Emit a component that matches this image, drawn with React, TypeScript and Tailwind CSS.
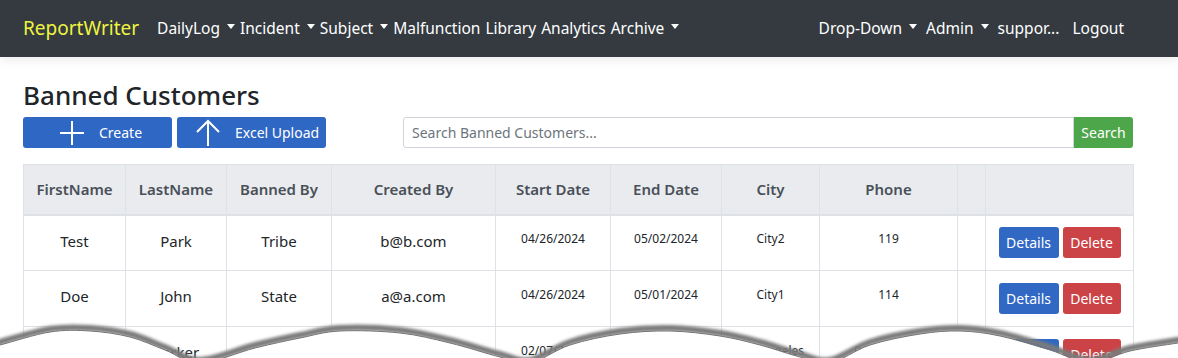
import React from "react";

type Row = {
  first: string;
  last: string;
  bannedBy: string;
  createdBy: string;
  start: string;
  end: string;
  city: string;
  phone: string;
};

const rows: Row[] = [
  { first: "Test", last: "Park", bannedBy: "Tribe", createdBy: "b@b.com", start: "04/26/2024", end: "05/02/2024", city: "City2", phone: "119" },
  { first: "Doe", last: "John", bannedBy: "State", createdBy: "a@a.com", start: "04/26/2024", end: "05/01/2024", city: "City1", phone: "114" },
  { first: "Peter", last: "Parker", bannedBy: "Casino", createdBy: "test@test.com", start: "02/07/2024", end: "02/07/2025", city: "Los Angeles", phone: "9495551234" },
];

// torn edge of the snip, points along the cut
const tear: [number, number][] = [
  [-20, 350], [0, 345], [50, 332], [90, 331], [130, 337], [165, 350], [200, 363], [255, 348], [300, 338],
  [340, 331], [400, 333], [450, 343], [500, 357], [530, 363], [570, 345], [620, 334], [670, 331],
  [720, 336], [760, 345], [800, 357], [830, 363], [870, 345], [920, 334], [960, 331], [1000, 336],
  [1050, 350], [1090, 363], [1130, 351], [1178, 343], [1200, 340],
];

function smooth(pts: [number, number][]) {
  let d = `M${pts[0][0]},${pts[0][1]}`;
  for (let i = 0; i < pts.length - 1; i++) {
    const p0 = pts[i - 1] ?? pts[i];
    const p1 = pts[i];
    const p2 = pts[i + 1];
    const p3 = pts[i + 2] ?? p2;
    const c1x = p1[0] + (p2[0] - p0[0]) / 6;
    const c1y = p1[1] + (p2[1] - p0[1]) / 6;
    const c2x = p2[0] - (p3[0] - p1[0]) / 6;
    const c2y = p2[1] - (p3[1] - p1[1]) / 6;
    d += ` C${c1x},${c1y} ${c2x},${c2y} ${p2[0]},${p2[1]}`;
  }
  return d;
}

function Caret() {
  return <span className="ml-[7px] inline-block h-0 w-0 translate-y-[-2px] border-x-[4px] border-t-[5px] border-x-transparent border-t-white" />;
}

function NavItem({ label, caret }: { label: string; caret?: boolean }) {
  return (
    <span className="flex items-center whitespace-nowrap text-white">
      {label}
      {caret && <Caret />}
    </span>
  );
}

function TornEdge() {
  const curve = smooth(tear);
  const fillD = `${curve} L1200,380 L-20,380 Z`;
  return (
    <svg className="pointer-events-none absolute inset-0" width={1178} height={358} viewBox="0 0 1178 358">
      <defs>
        <filter id="tearBlur" x="-5%" y="-50%" width="110%" height="200%">
          <feGaussianBlur stdDeviation="1.8" />
        </filter>
      </defs>
      <path d={curve} fill="none" stroke="#7a7a7a" strokeWidth={6} filter="url(#tearBlur)" transform="translate(0,-3)" />
      <path d={fillD} fill="#ffffff" />
      <path d={curve} fill="none" stroke="#737373" strokeWidth={1} />
    </svg>
  );
}

export default function App() {
  const th = "border border-[#dee2e6] px-2 text-center font-semibold text-[#495057]";
  const td = "border border-[#dee2e6] px-2 text-center";

  return (
    <div className="relative h-[358px] w-[1178px] overflow-hidden bg-white font-['Noto_Sans',sans-serif] text-[#212529]">
      <nav className="relative z-10 flex h-[57px] items-center bg-[#343a40] pl-[23px] pr-[54px] text-[15.5px] shadow-[0_3px_10px_rgba(0,0,0,0.08)]">
        <span className="mr-[18px] text-[19px] text-[#eef43f]">ReportWriter</span>
        <div className="flex items-center gap-[5px]">
          <NavItem label="DailyLog" caret />
          <NavItem label="Incident" caret />
          <NavItem label="Subject" caret />
          <NavItem label="Malfunction" />
          <NavItem label="Library" />
          <NavItem label="Analytics" />
          <NavItem label="Archive" caret />
        </div>
        <div className="ml-auto flex items-center gap-[9px]">
          <NavItem label="Drop-Down" caret />
          <NavItem label="Admin" caret />
          <span className="mr-[4px] text-white">suppor...</span>
          <span className="text-white">Logout</span>
        </div>
      </nav>

      <main className="w-[1133px] pl-[23px]">
        <h2 className="mt-[20px] text-[26px] font-medium leading-[36px]">Banned Customers</h2>

        <div className="mt-[4px] flex h-[31px] items-stretch">
          <button className="flex w-[149px] items-center rounded-[3px] bg-[#2f67c4] pl-[36px] text-[14px] text-white">
            <svg width="26" height="26" viewBox="0 0 26 26" className="shrink-0">
              <path d="M13 1v24M1 13h24" stroke="#fff" strokeWidth="2" />
            </svg>
            <span className="ml-[14px]">Create</span>
          </button>
          <button className="ml-[5px] flex w-[149px] items-center rounded-[3px] bg-[#2f67c4] pl-[18px] text-[14px] text-white">
            <svg width="26" height="28" viewBox="0 0 26 28" className="shrink-0">
              <path d="M13 2v25M2 13L13 2l11 11" stroke="#fff" strokeWidth="2" fill="none" />
            </svg>
            <span className="ml-[14px]">Excel Upload</span>
          </button>
          <div className="ml-auto flex w-[730px]">
            <div className="flex flex-1 items-center rounded-l-[3px] border border-[#ced4da] pl-[8px] text-[14px] text-[#6c757d]">
              Search Banned Customers...
            </div>
            <button className="w-[59px] rounded-r-[3px] bg-[#4ea64b] text-[14px] text-white">Search</button>
          </div>
        </div>

        <table className="mt-[16px] w-[1110px] table-fixed border-collapse">
          <colgroup>
            <col className="w-[102px]" />
            <col className="w-[101px]" />
            <col className="w-[105px]" />
            <col className="w-[164px]" />
            <col className="w-[115px]" />
            <col className="w-[111px]" />
            <col className="w-[98px]" />
            <col className="w-[138px]" />
            <col className="w-[28px]" />
            <col className="w-[148px]" />
          </colgroup>
          <thead>
            <tr className="h-[50px] border-b-2 border-[#dee2e6] bg-[#e9ebef] text-[15px]">
              <th className={th}>FirstName</th>
              <th className={th}>LastName</th>
              <th className={th}>Banned By</th>
              <th className={th}>Created By</th>
              <th className={th}>Start Date</th>
              <th className={th}>End Date</th>
              <th className={th}>City</th>
              <th className={th}>Phone</th>
              <th className={th}></th>
              <th className={th}></th>
            </tr>
          </thead>
          <tbody>
            {rows.map((r) => (
              <tr key={r.createdBy} className="h-[56px] text-[15px]">
                <td className={`${td} pb-[4px]`}>{r.first}</td>
                <td className={`${td} pb-[4px]`}>{r.last}</td>
                <td className={`${td} pb-[4px]`}>{r.bannedBy}</td>
                <td className={`${td} pb-[4px]`}>{r.createdBy}</td>
                <td className={`${td} pb-[7px] text-[12px]`}>{r.start}</td>
                <td className={`${td} pb-[7px] text-[12px]`}>{r.end}</td>
                <td className={`${td} pb-[7px] text-[12px]`}>{r.city}</td>
                <td className={`${td} pb-[7px] text-[12px]`}>{r.phone}</td>
                <td className={td}></td>
                <td className={td}>
                  <div className="flex justify-center gap-[4px]">
                    <button className="h-[31px] w-[60px] rounded-[3px] bg-[#3068c3] text-[14px] text-white">Details</button>
                    <button className="h-[31px] w-[58px] rounded-[3px] bg-[#cc4347] text-[14px] text-white">Delete</button>
                  </div>
                </td>
              </tr>
            ))}
          </tbody>
        </table>
      </main>

      <TornEdge />
    </div>
  );
}
